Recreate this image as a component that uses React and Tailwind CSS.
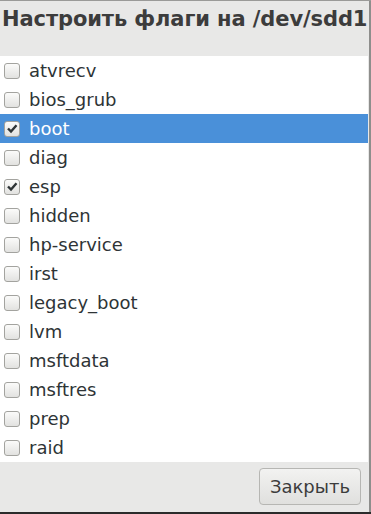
import { useState } from "react";

const FLAGS = [
  "atvrecv",
  "bios_grub",
  "boot",
  "diag",
  "esp",
  "hidden",
  "hp-service",
  "irst",
  "legacy_boot",
  "lvm",
  "msftdata",
  "msftres",
  "prep",
  "raid",
];

function Check({ checked }) {
  return (
    <div className="w-[16px] h-[16px] rounded-[3px] border border-[#a3a39f] bg-gradient-to-b from-[#fbfbfa] to-[#e2e2e0] flex items-center justify-center shrink-0">
      {checked && (
        <svg width="12" height="11" viewBox="0 0 12 11">
          <path d="M2 5.5 L5 8.5 L10.5 2.2" fill="none" stroke="#2e3436" strokeWidth="2.4" />
        </svg>
      )}
    </div>
  );
}

export default function App() {
  const [checked] = useState({ boot: true, esp: true });
  const selected = "boot";

  return (
    <div
      className="w-[371px] h-[514px] bg-[#e8e8e7] flex flex-col border-t border-[#9a9a98] relative overflow-hidden"
      style={{ fontFamily: "'DejaVu Sans', sans-serif" }}
    >
      {/* title */}
      <div className="h-[55px] pl-[2px] pt-[3px] text-[21px] font-bold text-[#3c3c3c] tracking-[-0.1px] whitespace-nowrap">
        Настроить флаги на /dev/sdd1
      </div>

      {/* list */}
      <div className="w-[368px] bg-white flex flex-col">
        {FLAGS.map((f) => (
          <div
            key={f}
            className={`h-[29px] flex items-center pl-[4px] gap-[9px] text-[18px] ${
              selected === f ? "bg-[#4a90d9] text-white" : "text-[#2e3436]"
            }`}
          >
            <Check checked={!!checked[f]} />
            <span>{f}</span>
          </div>
        ))}
      </div>

      {/* footer */}
      <div className="flex-1 flex justify-end items-start pt-[6px] pr-[10px]">
        <button className="w-[102px] h-[37px] rounded-[4px] border border-[#b6b6b3] bg-gradient-to-b from-[#f2f2f1] to-[#e0e0de] text-[18px] text-[#3c3c3c]">
          Закрыть
        </button>
      </div>

      {/* window edge */}
      <div className="absolute right-0 top-0 bottom-0 w-[2px] bg-[#8e8e8c]" />
      <div className="absolute left-0 right-0 bottom-0 h-[2px] bg-[#2b2b2b]" />
    </div>
  );
}
